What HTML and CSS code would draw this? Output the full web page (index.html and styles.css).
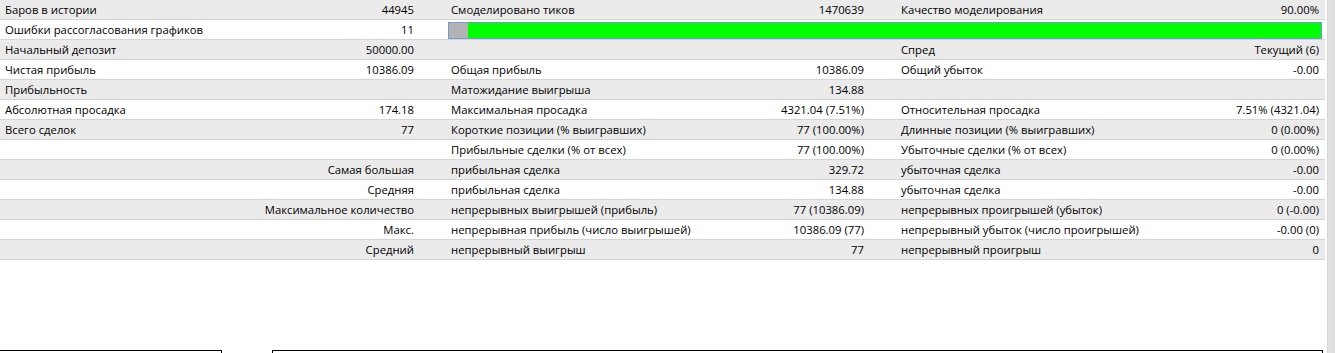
FILE: index.html
```html
<!DOCTYPE html>
<html lang="ru">
<head>
<meta charset="utf-8">
<title>Отчет</title>
<link rel="stylesheet" href="styles.css">
</head>
<body>
<div class="page">
  <div class="main">
    <div class="report">
      <div class="row odd">
        <div class="lab first">Баров в истории</div><div class="val">44945</div>
        <div class="lab">Смоделировано тиков</div><div class="val">1470639</div>
        <div class="lab">Качество моделирования</div><div class="val">90.00%</div>
      </div>
      <div class="row">
        <div class="lab first">Ошибки рассогласования графиков</div><div class="val">11</div>
        <div class="barcell"><div class="bar"><div class="bar-gray"></div><div class="bar-green"></div></div></div>
      </div>
      <div class="row odd">
        <div class="lab first">Начальный депозит</div><div class="val">50000.00</div>
        <div class="lab"></div><div class="val"></div>
        <div class="lab">Спред</div><div class="val">Текущий (6)</div>
      </div>
      <div class="row">
        <div class="lab first">Чистая прибыль</div><div class="val">10386.09</div>
        <div class="lab">Общая прибыль</div><div class="val">10386.09</div>
        <div class="lab">Общий убыток</div><div class="val">-0.00</div>
      </div>
      <div class="row odd">
        <div class="lab first">Прибыльность</div><div class="val"></div>
        <div class="lab">Матожидание выигрыша</div><div class="val">134.88</div>
        <div class="lab"></div><div class="val"></div>
      </div>
      <div class="row">
        <div class="lab first">Абсолютная просадка</div><div class="val">174.18</div>
        <div class="lab">Максимальная просадка</div><div class="val">4321.04 (7.51%)</div>
        <div class="lab">Относительная просадка</div><div class="val">7.51% (4321.04)</div>
      </div>
      <div class="row odd">
        <div class="lab first">Всего сделок</div><div class="val">77</div>
        <div class="lab">Короткие позиции (% выигравших)</div><div class="val">77 (100.00%)</div>
        <div class="lab">Длинные позиции (% выигравших)</div><div class="val">0 (0.00%)</div>
      </div>
      <div class="row">
        <div class="lab first"></div><div class="val"></div>
        <div class="lab">Прибыльные сделки (% от всех)</div><div class="val">77 (100.00%)</div>
        <div class="lab">Убыточные сделки (% от всех)</div><div class="val">0 (0.00%)</div>
      </div>
      <div class="row odd">
        <div class="lab first"></div><div class="val">Самая большая</div>
        <div class="lab">прибыльная сделка</div><div class="val">329.72</div>
        <div class="lab">убыточная сделка</div><div class="val">-0.00</div>
      </div>
      <div class="row">
        <div class="lab first"></div><div class="val">Средняя</div>
        <div class="lab">прибыльная сделка</div><div class="val">134.88</div>
        <div class="lab">убыточная сделка</div><div class="val">-0.00</div>
      </div>
      <div class="row odd">
        <div class="lab first"></div><div class="val">Максимальное количество</div>
        <div class="lab">непрерывных выигрышей (прибыль)</div><div class="val">77 (10386.09)</div>
        <div class="lab">непрерывных проигрышей (убыток)</div><div class="val">0 (-0.00)</div>
      </div>
      <div class="row">
        <div class="lab first"></div><div class="val">Макс.</div>
        <div class="lab">непрерывная прибыль (число выигрышей)</div><div class="val">10386.09 (77)</div>
        <div class="lab">непрерывный убыток (число проигрышей)</div><div class="val">-0.00 (0)</div>
      </div>
      <div class="row odd">
        <div class="lab first"></div><div class="val">Средний</div>
        <div class="lab">непрерывный выигрыш</div><div class="val">77</div>
        <div class="lab">непрерывный проигрыш</div><div class="val">0</div>
      </div>
    </div>
    <div class="bottom">
      <div class="box box-left"></div>
      <div class="box box-right"></div>
    </div>
  </div>
  <div class="strip"></div>
</div>
</body>
</html>
```

FILE: styles.css
```css
html, body {
  margin: 0;
  padding: 0;
  background: #ffffff;
  overflow: hidden;
}

body {
  font-family: "Open Sans", "Noto Sans", sans-serif;
  font-size: 11.3px;
  color: #000000;
}

.page {
  display: flex;
  width: 1335px;
  height: 353px;
  overflow: hidden;
}

.main {
  width: 1325px;
  display: flex;
  flex-direction: column;
}

.report {
  display: flex;
  flex-direction: column;
}

.row {
  display: grid;
  grid-template-columns: 240px 180px 290px 160px 250px 205px;
  height: 20px;
  box-sizing: border-box;
  border-bottom: 1px solid #d5d5d5;
  background: #ffffff;
  align-items: center;
  white-space: nowrap;
}

.row.odd {
  background: #ebebeb;
}

.lab {
  padding-left: 31px;
  line-height: 19px;
  min-width: 0;
}

.lab.first {
  padding-left: 5px;
}

.val {
  text-align: right;
  padding-right: 6px;
  line-height: 19px;
  min-width: 0;
}

.barcell {
  grid-column: 3 / 7;
  height: 19px;
  display: flex;
  align-items: center;
  padding: 0 3px 0 28px;
}

.bar {
  flex: 1;
  height: 17px;
  box-sizing: border-box;
  border: 1px solid #6f9ad2;
  display: flex;
  margin-top: 1px;
}

.bar-gray {
  width: 19px;
  background: #b3b3b3;
}

.bar-green {
  flex: 1;
  background: #00ff00;
}

.bottom {
  margin-top: 90px;
  display: flex;
  gap: 50px;
}

.box {
  height: 20px;
  box-sizing: border-box;
  border: 1px solid #000000;
  border-bottom: none;
}

.box-left {
  width: 222px;
  border-left: none;
}

.box-right {
  flex: 1;
  margin-right: 2px;
}

.strip {
  margin-left: 2px;
  width: 8px;
  border-left: 1px solid #d8d8d8;
  background: linear-gradient(to right, #e4e4e4, #dcdcdc);
}
```
